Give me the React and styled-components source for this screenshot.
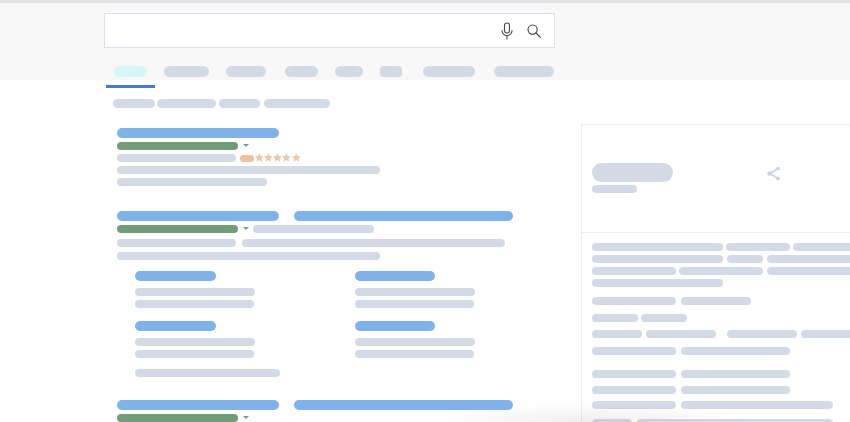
import React from "react";
import styled, { createGlobalStyle } from "styled-components";

const GlobalStyle = createGlobalStyle`
  html, body {
    margin: 0;
    padding: 0;
    background: #ffffff;
  }
`;

const Page = styled.div`
  position: relative;
  width: 850px;
  height: 422px;
  overflow: hidden;
  background: #ffffff;
`;

const Header = styled.header`
  height: 67px;
  border-top: 3px solid #e2e2e2;
  background: #f8f8f8;
  padding: 10px 0 0 104px;
`;

const SearchBox = styled.div`
  width: 451px;
  height: 35px;
  box-sizing: border-box;
  background: #ffffff;
  border: 1.5px solid #dde0ec;
  display: flex;
  align-items: center;
  justify-content: flex-end;
  gap: 13px;
  padding-right: 13px;
`;

const Tabs = styled.nav`
  display: flex;
  margin: 18px 0 0 9.5px;
`;

const Pill = styled.span`
  display: block;
  flex: none;
  width: ${(p) => p.$w}px;
  height: ${(p) => p.$h || 8}px;
  margin-left: ${(p) => p.$ml || 0}px;
  margin-top: ${(p) => p.$mt || 0}px;
  border-radius: ${(p) => p.$r || 4}px;
  background: ${(p) => p.$color || "#d4dae5"};
`;

const Underline = styled.div`
  width: 49px;
  height: 3px;
  margin: 5px 0 0 106px;
  background: #4a7ad0;
`;

const Filters = styled.div`
  display: flex;
  margin: 11px 0 0 113px;
`;

const Main = styled.main`
  display: flex;
  align-items: flex-start;
  padding-left: 117px;
`;

const Results = styled.section`
  flex: none;
  width: 464px;
  padding-top: 20px;
`;

const Row = styled.div`
  display: flex;
  align-items: flex-start;
  margin-top: ${(p) => p.$top || 0}px;
  margin-left: ${(p) => p.$left || 0}px;
`;

const Caret = styled.span`
  flex: none;
  width: 0;
  height: 0;
  margin: 2px 0 0 5px;
  border-left: 3px solid transparent;
  border-right: 3px solid transparent;
  border-top: 3.5px solid #7a9f80;
`;

const Stars = styled.span`
  display: flex;
  gap: 0.6px;
  margin: -1px 0 -1px 0.5px;
`;

const SubLinks = styled.div`
  display: grid;
  grid-template-columns: 220px 220px;
  row-gap: 13px;
  margin: 11px 0 0 18px;
`;

const SubLink = styled.div`
  display: flex;
  flex-direction: column;
`;

const SidePanel = styled.aside`
  flex: 1;
  margin-top: 16px;
  height: 300px;
  border-left: 1px solid #ebecf3;
  border-top: 1px solid #ebecf3;
`;

const PanelHead = styled.div`
  display: flex;
  justify-content: space-between;
  height: 108px;
  box-sizing: border-box;
  padding: 38px 82px 0 10px;
  border-bottom: 1px solid #ebecf3;
`;

const PanelTitle = styled.div`
  display: flex;
  flex-direction: column;
`;

const ShareButton = styled.div`
  margin-top: 3px;
`;

const PanelBody = styled.div`
  padding: 10px 0 0 10px;
`;

// fades the bottom edge of the shot
const BottomShade = styled.div`
  position: absolute;
  left: 430px;
  bottom: 0;
  width: 320px;
  height: 18px;
  pointer-events: none;
  background: radial-gradient(ellipse 160px 18px at 50% 100%, rgba(120, 120, 120, 0.13), rgba(120, 120, 120, 0));
`;

const MicIcon = () => (
  <svg width="14" height="18" viewBox="0 0 14 18" fill="none" stroke="#4a4a4a" strokeWidth="1.1">
    <rect x="4.500" y="1" width="5" height="10" rx="2.500" />
    <path d="M2 8.500c0 3 2.200 5 5 5s5-2 5-5M7 13.500V17" strokeLinecap="round" />
  </svg>
);

const SearchIcon = () => (
  <svg width="14" height="14" viewBox="0 0 14 14" fill="none" stroke="#3f3f3f" strokeWidth="1.1">
    <circle cx="5.600" cy="5.600" r="4.600" />
    <path d="M9 9l4.400 4.400" strokeLinecap="round" />
  </svg>
);

const ShareIcon = () => (
  <svg width="14" height="15" viewBox="0 0 14 15" fill="#cdd3de" stroke="#cdd3de">
    <path d="M11 2.500L3 7.500l8 5" fill="none" strokeWidth="1.600" />
    <circle cx="11" cy="2.500" r="2" stroke="none" />
    <circle cx="2.600" cy="7.500" r="2.300" stroke="none" />
    <circle cx="11" cy="12.500" r="2" stroke="none" />
  </svg>
);

const Star = () => (
  <svg width="8.700" height="9" viewBox="1 1 22 22" fill="#edc6ae">
    <path d="M12 1l3.300 7.400 8 .8-6 5.400 1.800 7.900L12 18.400l-7.100 4.100 1.800-7.900-6-5.400 8-.8z" />
  </svg>
);

const BLUE = "#7fb2e8";
const GREEN = "#729c78";

const tabs = [
  { w: 33.5, color: "#d6f6f6" },
  { w: 45, ml: 17 },
  { w: 40, ml: 17 },
  { w: 33.5, ml: 18.5 },
  { w: 28, ml: 17 },
  { w: 22, ml: 17, r: 3.5 },
  { w: 52.5, ml: 20.5 },
  { w: 60, ml: 19 },
];

const filters = [
  { w: 42 },
  { w: 59, ml: 2 },
  { w: 41, ml: 3 },
  { w: 66, ml: 4 },
];

const subLinks = [
  { title: 81, lines: [120, 119] },
  { title: 80, lines: [120, 119] },
  { title: 81, lines: [120, 119] },
  { title: 80, lines: [120, 119] },
];

// each row: top margin, then the bars with the space before them
const panelRows = [
  { top: 0, bars: [[131], [64, 3], [70, 3]] },
  { top: 4, bars: [[131], [36, 4], [90, 4]] },
  { top: 4, bars: [[84], [84, 3], [90, 4]] },
  { top: 4, bars: [[131]] },
  { top: 10, bars: [[84], [70, 5]] },
  { top: 9, bars: [[46], [46, 3]] },
  { top: 8, bars: [[50], [70, 4], [70, 11], [60, 4]] },
  { top: 9, bars: [[84], [109, 5]] },
  { top: 15, bars: [[84], [109, 5]] },
  { top: 8, bars: [[84], [109, 5]] },
  { top: 7, bars: [[84], [152, 5]] },
  { top: 10, bars: [[40], [196, 5]] },
];

const TitleRow = ({ top, second }) => (
  <Row $top={top}>
    <Pill $w={162} $h={10} $r={5} $color={BLUE} />
    {second && <Pill $w={219} $h={10} $r={5} $ml={15} $color={BLUE} />}
  </Row>
);

const App = () => {
  return (
    <Page>
      <GlobalStyle />
      <Header>
        <SearchBox>
          <MicIcon />
          <SearchIcon />
        </SearchBox>
        <Tabs>
          {tabs.map((t, i) => (
            <Pill key={i} $w={t.w} $h={11} $r={t.r || 5.5} $ml={t.ml} $color={t.color} />
          ))}
        </Tabs>
      </Header>
      <Underline />
      <Filters>
        {filters.map((f, i) => (
          <Pill key={i} $w={f.w} $h={9} $r={4.5} $ml={f.ml} />
        ))}
      </Filters>
      <Main>
        <Results>
          <TitleRow />
          <Row $top={4}>
            <Pill $w={121} $color={GREEN} />
            <Caret />
          </Row>
          <Row $top={4}>
            <Pill $w={119} />
            <Pill $w={14} $h={7} $mt={1} $ml={4} $color="#ecc1a4" />
            <Stars>
              <Star /><Star /><Star /><Star /><Star />
            </Stars>
          </Row>
          <Row $top={4}><Pill $w={263} /></Row>
          <Row $top={4}><Pill $w={150} /></Row>

          <TitleRow top={25} second />
          <Row $top={4}>
            <Pill $w={121} $color={GREEN} />
            <Caret />
            <Pill $w={121} $ml={4} />
          </Row>
          <Row $top={6}>
            <Pill $w={119} />
            <Pill $w={263} $ml={6} />
          </Row>
          <Row $top={5}><Pill $w={263} /></Row>

          <SubLinks>
            {subLinks.map((s, i) => (
              <SubLink key={i}>
                <Pill $w={s.title} $h={10} $r={5} $color={BLUE} />
                <Pill $w={s.lines[0]} $mt={7} />
                <Pill $w={s.lines[1]} $mt={4} />
              </SubLink>
            ))}
          </SubLinks>
          <Row $top={11} $left={18}><Pill $w={145} /></Row>

          <TitleRow top={23} second />
          <Row $top={4}>
            <Pill $w={121} $color={GREEN} />
            <Caret />
          </Row>
        </Results>
        <SidePanel>
          <PanelHead>
            <PanelTitle>
              <Pill $w={81} $h={19} $r={9.5} />
              <Pill $w={45} $mt={3} />
            </PanelTitle>
            <ShareButton><ShareIcon /></ShareButton>
          </PanelHead>
          <PanelBody>
            {panelRows.map((r, i) => (
              <Row key={i} $top={r.top}>
                {r.bars.map(([w, ml], j) => (
                  <Pill key={j} $w={w} $ml={ml} />
                ))}
              </Row>
            ))}
          </PanelBody>
        </SidePanel>
      </Main>
      <BottomShade />
    </Page>
  );
};

export default App;
